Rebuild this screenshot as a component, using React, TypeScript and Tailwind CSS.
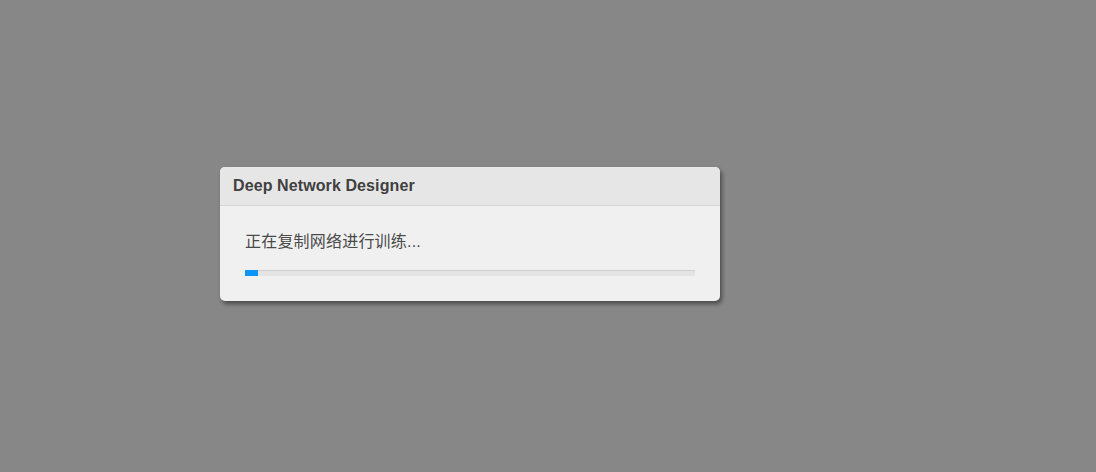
export default function App() {
  return (
    <div className="min-h-screen w-full bg-[#878787] pl-[220px] pt-[167px] font-['Liberation_Sans','Noto_Sans_CJK_SC',sans-serif]">
      <div className="w-[500px] rounded-[5px] bg-[#f0f0f0] shadow-[2px_3px_4px_rgba(0,0,0,0.45)] overflow-hidden">
        <div className="h-[39px] bg-[#e6e6e6] border-b border-[#d6d6d6] pl-[13px] flex items-center">
          <span className="text-[16px] font-bold text-[#404040] tracking-[0.1px]">Deep Network Designer</span>
        </div>
        <div className="px-[25px] pt-[26px] pb-[25px]">
          <div className="h-[20px] leading-[20px] text-[16px] text-[#4a4a4a] tracking-[0.2px]">
            正在复制网络进行训练...
          </div>
          <div className="mt-[18px] h-[6px] bg-[#e4e4e4] border-t border-[#cfcfcf] relative">
            <div className="absolute left-0 top-[-1px] h-[6px] w-[13px] bg-[#0b96f4]" />
          </div>
        </div>
      </div>
    </div>
  );
}
